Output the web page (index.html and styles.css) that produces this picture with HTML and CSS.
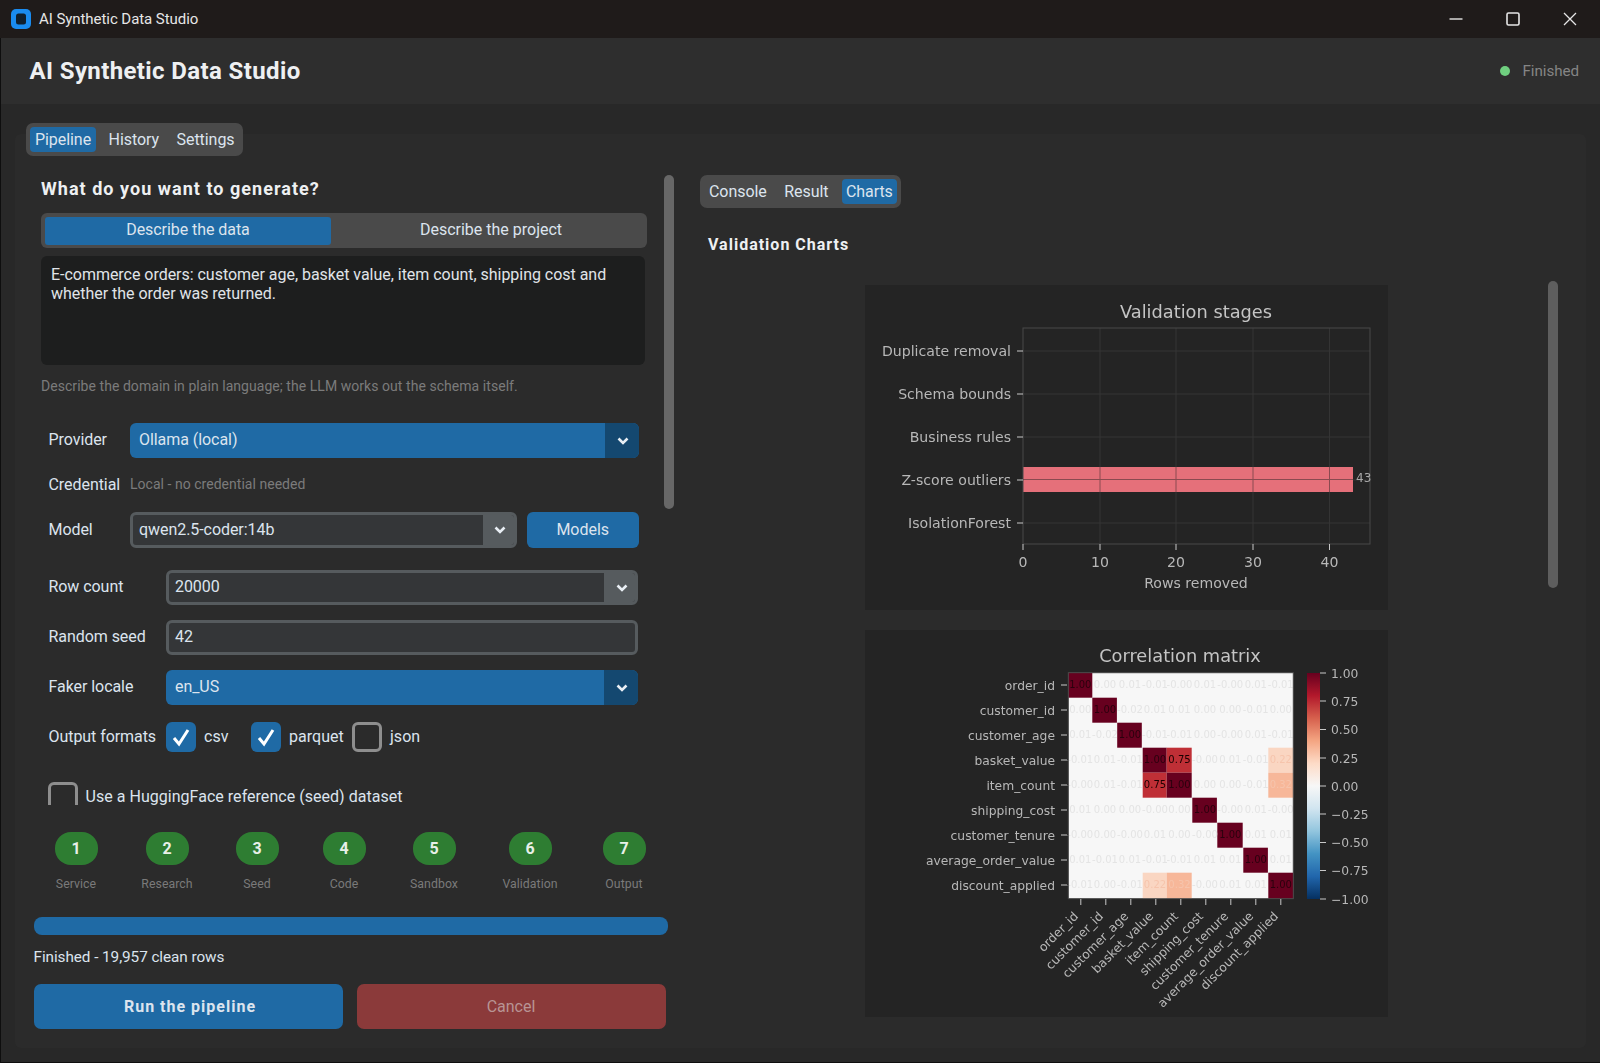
FILE: index.html
```html
<!DOCTYPE html>
<html lang="en">
<head>
<meta charset="utf-8">
<title>AI Synthetic Data Studio</title>
<link rel="stylesheet" href="styles.css">
</head>
<body>
<div class="app">
  <div class="titlebar">
    <svg class="app-icon" viewBox="0 0 20 20"><rect x="0" y="0" width="20" height="20" rx="5" fill="#1a8cf0"/><rect x="5" y="4.5" width="10" height="11" rx="2.5" fill="#10202e"/></svg>
    <span class="titlebar-text">AI Synthetic Data Studio</span>
    <div class="win-controls">
      <svg class="win-icon" viewBox="0 0 14 14"><path d="M0.5 7H13.5" stroke="#e6e6e6" stroke-width="1.4" fill="none"/></svg>
      <svg class="win-icon" viewBox="0 0 14 14"><rect x="1" y="1" width="12" height="12" rx="1.5" stroke="#e6e6e6" stroke-width="1.6" fill="none"/></svg>
      <svg class="win-icon" viewBox="0 0 14 14"><path d="M1 1L13 13M13 1L1 13" stroke="#e6e6e6" stroke-width="1.3" fill="none"/></svg>
    </div>
  </div>
  <header class="header">
    <h1 class="app-title">AI Synthetic Data Studio</h1>
    <div class="status"><span class="status-dot"></span><span>Finished</span></div>
  </header>
  <main class="workspace">
    <div class="panel">
      <nav class="tabs main-tabs">
        <span class="tab active">Pipeline</span><span class="tab">History</span><span class="tab">Settings</span>
      </nav>
      <div class="columns">
        <section class="left-col">
          <div class="form-scroll">
            <div class="form">
              <h2 class="section-title">What do you want to generate?</h2>
              <div class="segmented">
                <span class="seg active">Describe the data</span>
                <span class="seg seg-second">Describe the project</span>
              </div>
              <div class="textarea">E-commerce orders: customer age, basket value, item count, shipping cost and<br>whether the order was returned.</div>
              <p class="hint">Describe the domain in plain language; the LLM works out the schema itself.</p>

              <div class="row row-provider">
                <label class="row-label label-short">Provider</label>
                <div class="combo blue"><span class="combo-value">Ollama (local)</span><span class="combo-arrow"><svg class="chev" viewBox="0 0 12 8"><path d="M1.5 1.5L6 6L10.5 1.5" stroke="#e8eef4" stroke-width="2.6" fill="none"/></svg></span></div>
              </div>
              <div class="row row-credential">
                <label class="row-label label-short">Credential</label>
                <span class="small-hint">Local - no credential needed</span>
              </div>
              <div class="row row-model">
                <label class="row-label label-short">Model</label>
                <div class="combo grey model-combo"><span class="combo-value">qwen2.5-coder:14b</span><span class="combo-arrow"><svg class="chev" viewBox="0 0 12 8"><path d="M1.5 1.5L6 6L10.5 1.5" stroke="#e8eef4" stroke-width="2.6" fill="none"/></svg></span></div>
                <button class="btn-models">Models</button>
              </div>
              <div class="row row-count">
                <label class="row-label label-long">Row count</label>
                <div class="combo grey"><span class="combo-value">20000</span><span class="combo-arrow"><svg class="chev" viewBox="0 0 12 8"><path d="M1.5 1.5L6 6L10.5 1.5" stroke="#e8eef4" stroke-width="2.6" fill="none"/></svg></span></div>
              </div>
              <div class="row row-seed">
                <label class="row-label label-long">Random seed</label>
                <div class="entry">42</div>
              </div>
              <div class="row row-seed">
                <label class="row-label label-long">Faker locale</label>
                <div class="combo blue"><span class="combo-value">en_US</span><span class="combo-arrow"><svg class="chev" viewBox="0 0 12 8"><path d="M1.5 1.5L6 6L10.5 1.5" stroke="#e8eef4" stroke-width="2.6" fill="none"/></svg></span></div>
              </div>
              <div class="row row-formats">
                <label class="row-label label-long">Output formats</label>
                <span class="check on"><svg viewBox="0 0 30 30"><path d="M8 16L13 22L22 8" stroke="#fff" stroke-width="3" fill="none"/></svg></span>
                <span class="check-text text-csv">csv</span>
                <span class="check on"><svg viewBox="0 0 30 30"><path d="M8 16L13 22L22 8" stroke="#fff" stroke-width="3" fill="none"/></svg></span>
                <span class="check-text text-parquet">parquet</span>
                <span class="check"></span>
                <span class="check-text">json</span>
              </div>
              <div class="row row-hf">
                <span class="check"></span>
                <span class="check-text">Use a HuggingFace reference (seed) dataset</span>
              </div>
            </div>
            <div class="scrollbar left-scrollbar"><div class="thumb left-thumb"></div></div>
          </div>
          <div class="run-area">
            <ol class="stepper">
              <li class="step"><span class="step-dot">1</span><span class="step-label">Service</span></li>
              <li class="step"><span class="step-dot">2</span><span class="step-label">Research</span></li>
              <li class="step"><span class="step-dot">3</span><span class="step-label">Seed</span></li>
              <li class="step"><span class="step-dot">4</span><span class="step-label">Code</span></li>
              <li class="step"><span class="step-dot">5</span><span class="step-label">Sandbox</span></li>
              <li class="step"><span class="step-dot">6</span><span class="step-label">Validation</span></li>
              <li class="step"><span class="step-dot">7</span><span class="step-label">Output</span></li>
            </ol>
            <div class="progress"></div>
            <p class="run-status">Finished - 19,957 clean rows</p>
            <div class="run-buttons">
              <button class="btn-run">Run the pipeline</button>
              <button class="btn-cancel">Cancel</button>
            </div>
          </div>
        </section>
        <section class="right-col">
          <nav class="tabs output-tabs">
            <span class="tab">Console</span><span class="tab">Result</span><span class="tab active">Charts</span>
          </nav>
          <h2 class="charts-title">Validation Charts</h2>
          <div class="chart-area">
            <div class="charts">
              <figure class="chart-card card-stages">
                <svg class="chart" viewBox="865 285 523 325">
                  <text class="plot-title" x="1196" y="318" text-anchor="middle">Validation stages</text>
                  <g class="grid">
                    <path d="M1100 328V544M1176 328V544M1253 328V544M1329.5 328V544M1023 351H1370M1023 394H1370M1023 437H1370M1023 480H1370M1023 523H1370"/>
                  </g>
                  <rect x="1023" y="467" width="330" height="25" fill="#e5707a"/>
                  <path class="grid-over" d="M1100 467V492M1176 467V492M1253 467V492M1329.5 467V492M1023 479.5H1353"/>
                  <rect class="plot-frame" x="1023" y="328" width="347" height="216"/>
                  <path class="tick" d="M1017 351H1023M1017 394H1023M1017 437H1023M1017 480H1023M1017 523H1023M1023 544V550M1100 544V550M1176 544V550M1253 544V550M1329.5 544V550"/>
                  <g class="axis-text stage-text end">
                    <text x="1011" y="355.5">Duplicate removal</text>
                    <text x="1011" y="398.5">Schema bounds</text>
                    <text x="1011" y="441.5">Business rules</text>
                    <text x="1011" y="484.5">Z-score outliers</text>
                    <text x="1011" y="527.5">IsolationForest</text>
                  </g>
                  <g class="axis-text stage-text middle">
                    <text x="1023" y="567">0</text>
                    <text x="1100" y="567">10</text>
                    <text x="1176" y="567">20</text>
                    <text x="1253" y="567">30</text>
                    <text x="1329.5" y="567">40</text>
                    <text x="1196" y="588">Rows removed</text>
                  </g>
                  <text class="bar-value" x="1356" y="482">43</text>
                </svg>
              </figure>
              <figure class="chart-card card-corr">
                <svg class="chart" viewBox="865 630 523 387">
                  <defs>
                    <linearGradient id="rdbu" x1="0" y1="0" x2="0" y2="1">
                      <stop offset="0" stop-color="#67001f"/><stop offset=".1" stop-color="#b2182b"/><stop offset=".2" stop-color="#d6604d"/><stop offset=".3" stop-color="#f4a582"/><stop offset=".4" stop-color="#fddbc7"/><stop offset=".5" stop-color="#f7f7f7"/><stop offset=".6" stop-color="#d1e5f0"/><stop offset=".7" stop-color="#92c5de"/><stop offset=".8" stop-color="#4393c3"/><stop offset=".9" stop-color="#2166ac"/><stop offset="1" stop-color="#053061"/>
                    </linearGradient>
                  </defs>
                  <text class="plot-title" x="1180" y="662" text-anchor="middle">Correlation matrix</text>
                  <rect x="1068.3" y="672.7" width="225" height="226" fill="#f7f7f7"/>
                  <g>
                    <rect class="c100" x="1068.3" y="672.7" width="24" height="25"/>
                    <rect class="c100" x="1092.3" y="697.7" width="24.6" height="25"/>
                    <rect class="c100" x="1117.2" y="722.7" width="24.6" height="25"/>
                    <rect class="c100" x="1142.7" y="747.7" width="24" height="25"/>
                    <rect class="c75" x="1166.7" y="747.7" width="25" height="25"/>
                    <rect class="c75" x="1142.7" y="772.7" width="24" height="25"/>
                    <rect class="c100" x="1166.7" y="772.7" width="25" height="25"/>
                    <rect class="c100" x="1192.3" y="797.7" width="24.6" height="25"/>
                    <rect class="c100" x="1217.3" y="822.7" width="25.4" height="25"/>
                    <rect class="c100" x="1243.3" y="847.7" width="24.6" height="25"/>
                    <rect class="c100" x="1268.3" y="872.7" width="25" height="26"/>
                    <rect class="c22" x="1268.3" y="747.7" width="25" height="25"/>
                    <rect class="c32" x="1268.3" y="772.7" width="25" height="25"/>
                    <rect class="c22" x="1142.7" y="872.7" width="24" height="26"/>
                    <rect class="c32" x="1166.7" y="872.7" width="25" height="26"/>
                  </g>
                  <g class="cell-text">
                    <text class="dark" x="1080.3" y="688">1.00</text><text x="1105" y="688">0.00</text><text x="1130" y="688">0.01</text><text x="1155" y="688">-0.01</text><text x="1179.5" y="688">-0.00</text><text x="1205" y="688">0.01</text><text x="1230.3" y="688">-0.00</text><text x="1255.8" y="688">0.01</text><text x="1280.8" y="688">-0.01</text>
                    <text x="1080.3" y="713">0.00</text><text class="dark" x="1105" y="713">1.00</text><text x="1130" y="713">-0.02</text><text x="1155" y="713">0.01</text><text x="1179.5" y="713">0.01</text><text x="1205" y="713">0.00</text><text x="1230.3" y="713">0.00</text><text x="1255.8" y="713">-0.01</text><text x="1280.8" y="713">0.00</text>
                    <text x="1080.3" y="738">0.01</text><text x="1105" y="738">-0.02</text><text class="dark" x="1130" y="738">1.00</text><text x="1155" y="738">-0.01</text><text x="1179.5" y="738">-0.01</text><text x="1205" y="738">0.00</text><text x="1230.3" y="738">-0.00</text><text x="1255.8" y="738">0.01</text><text x="1280.8" y="738">-0.01</text>
                    <text x="1080.3" y="763">-0.01</text><text x="1105" y="763">0.01</text><text x="1130" y="763">-0.01</text><text class="dark" x="1155" y="763">1.00</text><text class="mid" x="1179.5" y="763">0.75</text><text x="1205" y="763">-0.00</text><text x="1230.3" y="763">0.01</text><text x="1255.8" y="763">-0.01</text><text class="warm" x="1280.8" y="763">0.22</text>
                    <text x="1080.3" y="788">-0.00</text><text x="1105" y="788">0.01</text><text x="1130" y="788">-0.01</text><text class="mid" x="1155" y="788">0.75</text><text class="dark" x="1179.5" y="788">1.00</text><text x="1205" y="788">0.00</text><text x="1230.3" y="788">0.00</text><text x="1255.8" y="788">-0.01</text><text class="warm" x="1280.8" y="788">0.32</text>
                    <text x="1080.3" y="813">0.01</text><text x="1105" y="813">0.00</text><text x="1130" y="813">0.00</text><text x="1155" y="813">-0.00</text><text x="1179.5" y="813">0.00</text><text class="dark" x="1205" y="813">1.00</text><text x="1230.3" y="813">-0.00</text><text x="1255.8" y="813">0.01</text><text x="1280.8" y="813">-0.00</text>
                    <text x="1080.3" y="838">-0.00</text><text x="1105" y="838">0.00</text><text x="1130" y="838">-0.00</text><text x="1155" y="838">0.01</text><text x="1179.5" y="838">0.00</text><text x="1205" y="838">-0.00</text><text class="dark" x="1230.3" y="838">1.00</text><text x="1255.8" y="838">0.01</text><text x="1280.8" y="838">0.01</text>
                    <text x="1080.3" y="863">0.01</text><text x="1105" y="863">-0.01</text><text x="1130" y="863">0.01</text><text x="1155" y="863">-0.01</text><text x="1179.5" y="863">-0.01</text><text x="1205" y="863">0.01</text><text x="1230.3" y="863">0.01</text><text class="dark" x="1255.8" y="863">1.00</text><text x="1280.8" y="863">0.01</text>
                    <text x="1080.3" y="888">-0.01</text><text x="1105" y="888">0.00</text><text x="1130" y="888">-0.01</text><text class="warm" x="1155" y="888">0.22</text><text class="warm" x="1179.5" y="888">0.32</text><text x="1205" y="888">-0.00</text><text x="1230.3" y="888">0.01</text><text x="1255.8" y="888">0.01</text><text class="dark" x="1280.8" y="888">1.00</text>
                  </g>
                  <rect class="heat-frame" x="1068.3" y="672.7" width="225" height="226"/>
                  <path class="tick" d="M1061 685H1067M1061 710H1067M1061 735H1067M1061 760H1067M1061 785H1067M1061 810H1067M1061 835H1067M1061 860H1067M1061 885H1067"/>
                  <path class="tick" d="M1080.8 899V905M1105.8 899V905M1130.8 899V905M1155.8 899V905M1180.8 899V905M1205.8 899V905M1230.8 899V905M1255.8 899V905M1280.8 899V905"/>
                  <g class="axis-text end">
                    <text x="1055" y="690">order_id</text>
                    <text x="1055" y="715">customer_id</text>
                    <text x="1055" y="740">customer_age</text>
                    <text x="1055" y="765">basket_value</text>
                    <text x="1055" y="790">item_count</text>
                    <text x="1055" y="815">shipping_cost</text>
                    <text x="1055" y="840">customer_tenure</text>
                    <text x="1055" y="865">average_order_value</text>
                    <text x="1055" y="890">discount_applied</text>
                    <text transform="rotate(-45 1079 917)" x="1079" y="917">order_id</text>
                    <text transform="rotate(-45 1104 917)" x="1104" y="917">customer_id</text>
                    <text transform="rotate(-45 1129 917)" x="1129" y="917">customer_age</text>
                    <text transform="rotate(-45 1154 917)" x="1154" y="917">basket_value</text>
                    <text transform="rotate(-45 1179 917)" x="1179" y="917">item_count</text>
                    <text transform="rotate(-45 1204 917)" x="1204" y="917">shipping_cost</text>
                    <text transform="rotate(-45 1229 917)" x="1229" y="917">customer_tenure</text>
                    <text transform="rotate(-45 1254 917)" x="1254" y="917">average_order_value</text>
                    <text transform="rotate(-45 1279 917)" x="1279" y="917">discount_applied</text>
                  </g>
                  <rect x="1307" y="673" width="13" height="226" fill="url(#rdbu)"/>
                  <path class="tick" d="M1320 673H1326M1320 701H1326M1320 729.5H1326M1320 758H1326M1320 786H1326M1320 814H1326M1320 842.5H1326M1320 870.5H1326M1320 899H1326"/>
                  <g class="axis-text">
                    <text x="1331" y="677.5">1.00</text>
                    <text x="1331" y="705.5">0.75</text>
                    <text x="1331" y="734">0.50</text>
                    <text x="1331" y="762.5">0.25</text>
                    <text x="1331" y="790.5">0.00</text>
                    <text x="1331" y="818.5">−0.25</text>
                    <text x="1331" y="847">−0.50</text>
                    <text x="1331" y="875">−0.75</text>
                    <text x="1331" y="903.5">−1.00</text>
                  </g>
                </svg>
              </figure>
            </div>
            <div class="scrollbar right-scrollbar"><div class="thumb right-thumb"></div></div>
          </div>
        </section>
      </div>
    </div>
  </main>
</div>
</body>
</html>
```
FILE: styles.css
```css
* { box-sizing: border-box; }
html, body { margin: 0; padding: 0; background: #0e0e0e; }
body { width: 1600px; height: 1063px; overflow: hidden; font-family: Roboto, "Liberation Sans", sans-serif; color: #dce4ee; font-size: 16px; letter-spacing: -.06px; }
.app { width: 1600px; height: 1063px; display: flex; flex-direction: column; padding-left: 1px; padding-bottom: 1px; }

.titlebar { height: 38px; margin-left: -1px; flex: none; background: #1f1b1a; display: flex; align-items: center; padding-left: 11px; padding-right: 23px; }
.app-icon { width: 20px; height: 20px; }
.titlebar-text { margin-left: 8px; font-size: 15px; color: #e6e6e6; }
.win-controls { margin-left: auto; display: flex; align-items: center; gap: 43px; }
.win-icon { width: 14px; height: 14px; display: block; }

.header { height: 66px; flex: none; background: #2e2e2e; display: flex; align-items: center; justify-content: space-between; padding: 0 21px 0 28.5px; }
.app-title { margin: 0; font-size: 24px; font-weight: 700; color: #eef0f2; line-height: 1; letter-spacing: .38px; }
.status { display: flex; align-items: center; gap: 12px; font-size: 15.2px; color: #858585; }
.status-dot { width: 10px; height: 10px; border-radius: 50%; background: #6fcf7f; }

.workspace { flex: 1; min-height: 0; background: #282828; padding: 30px 14px 14px; }
.panel { height: 100%; background: #2b2b2b; border-radius: 6px; display: flow-root; }

.tabs { display: flex; background: #4a4a4a; border-radius: 7px; padding: 4px; }
.tab { display: flex; align-items: center; padding: 0 5px; border-radius: 4px; font-size: 16px; color: #dce4ee; height: 25px; }
.tab.active { background: #1f6aa5; }
.main-tabs { width: 217px; height: 33px; margin: -11px 0 0 11px; }
.main-tabs .tab + .tab { margin-left: 7.5px; }
.output-tabs { width: 201px; height: 33px; padding-left: 5px; }
.output-tabs .tab { padding: 0 4px; }
.output-tabs .tab + .tab { margin-left: 9.5px; }

.columns { display: flex; margin-top: 19px; }
.left-col { width: 673px; flex: none; padding-left: 26px; }
.right-col { margin-left: 12px; flex: 1; min-width: 0; }

.form-scroll { display: flex; height: 630px; overflow: hidden; gap: 17px; }
.form { width: 606px; flex: none; }
.scrollbar { width: 10px; flex: none; }
.thumb { background: #676767; border-radius: 5px; }
.left-thumb { height: 334px; }

.section-title { margin: 0; height: 28px; line-height: 28px; font-size: 18px; font-weight: 700; color: #eef0f2; letter-spacing: 1.03px; }
.segmented { margin-top: 10px; height: 35px; background: #4a4a4a; border-radius: 6px; padding: 4px; display: flex; }
.seg { flex: 1; display: flex; align-items: center; justify-content: center; border-radius: 3px; height: 28px; padding-bottom: 3px; }
.seg.active { flex: none; width: 286px; background: #1f6aa5; }
.seg-second { padding-left: 8px; letter-spacing: 0; }
.textarea { margin-top: 8px; width: 604px; height: 109px; background: #1d1e1e; border-radius: 6px; padding: 10px 10px; line-height: 18.5px; letter-spacing: -.03px; color: #e0e4e8; }
.hint { margin: 11px 0 0; height: 20px; line-height: 20px; font-size: 14px; letter-spacing: .05px; color: #7b7b7b; }

.row { display: flex; align-items: center; padding: 0 9px 0 7.5px; }
.row-label { flex: none; color: #dce4ee; padding-bottom: 2px; }
.label-short { width: 81.5px; }
.label-long { width: 117.5px; }
.row-provider { height: 35px; margin-top: 27px; padding-right: 8px; }
.row-credential { height: 26px; margin-top: 13px; }
.row-credential .row-label { padding-bottom: 0; }
.row-model { height: 36px; margin-top: 15px; gap: 10px; padding-right: 8px; }
.row-model .label-short { margin-right: -10px; }
.row-count { height: 35px; margin-top: 22px; }
.row-seed { height: 35px; margin-top: 15px; }
.row-formats { height: 30px; margin-top: 17px; }
.row-hf { height: 30px; margin-top: 30px; }
.row-hf .check { margin-left: -1px; }
.small-hint { font-size: 14px; letter-spacing: .03px; color: #7b7b7b; }

.combo { flex: 1; height: 100%; display: flex; border-radius: 6px; overflow: hidden; }
.combo-value { flex: 1; display: flex; align-items: center; padding-left: 9px; padding-bottom: 2px; }
.combo-arrow { width: 34px; display: flex; align-items: center; justify-content: center; padding-left: 1px; }
.combo.blue { background: #1f6aa5; }
.combo.blue .combo-arrow { background: #144870; }
.combo.grey { background: #343638; border: 3px solid #565b5e; }
.combo.grey .combo-value { padding-left: 6px; }
.combo.grey .combo-arrow { background: #565b5e; margin: -3px -3px -3px 0; }
.chev { width: 12px; height: 8px; display: block; }
.model-combo { flex: none; width: 386.5px; }
.btn-models { flex: 1; height: 100%; border: 0; border-radius: 6px; padding-bottom: 3px; background: #1f6aa5; color: #dce4ee; font: inherit; }
.entry { flex: 1; height: 100%; background: #343638; border: 3px solid #565b5e; border-radius: 6px; padding: 0 0 2px 6px; display: flex; align-items: center; }

.check { width: 30px; height: 30px; flex: none; border-radius: 6px; border: 3px solid #8e8e8e; display: block; }
.check.on { background: #1f6aa5; border: 0; }
.check svg { display: block; width: 30px; height: 30px; }
.check-text { margin-left: 8px; padding-bottom: 2px; letter-spacing: .03px; }
.text-csv { width: 47px; }
.text-parquet { width: 63px; }

.run-area { margin-left: -7.5px; width: 634.5px; }
.stepper { list-style: none; margin: 27px 0 0; padding: 0 0 0 21px; display: grid; grid-template-columns: 91px 90px 87px 90px 96px 94px 43px; }
.step { display: flex; flex-direction: column; align-items: center; width: 43px; }
.step-dot { width: 43px; height: 33px; flex: none; border-radius: 16px; background: #2e7d32; color: #e8f0e8; font-weight: 700; display: flex; align-items: center; justify-content: center; padding-bottom: 1px; }
.step-label { margin-top: 10px; height: 18px; line-height: 18px; font-size: 12.3px; letter-spacing: .05px; white-space: nowrap; color: #7a7a7a; }
.progress { margin-top: 24px; height: 18px; background: #1f6aa5; border-radius: 8px; }
.run-status { margin: 12px 0 0; height: 20px; line-height: 20px; font-size: 15.3px; color: #dce4ee; }
.run-buttons { margin-top: 17px; display: flex; gap: 14px; }
.btn-run, .btn-cancel { width: 309px; height: 45px; border: 0; border-radius: 7px; font-family: inherit; font-size: 16px; }
.btn-run { background: #1f6aa5; color: #dce4ee; font-weight: 700; letter-spacing: 1px; padding-left: 4px; padding-right: 0; }
.btn-cancel { background: #8b3a3a; color: #b89494; }

.charts-title { margin: 27px 0 0 8px; height: 20px; line-height: 20px; font-size: 16px; font-weight: 700; color: #eef0f2; letter-spacing: 1px; }
.chart-area { display: flex; margin-top: 30px; height: 753px; }
.charts { width: 848px; flex: none; padding-left: 165px; display: flex; flex-direction: column; gap: 20px; }
.chart-card { margin: 0; background: #242424; width: 523px; }
.card-stages { height: 325px; }
.card-corr { height: 387px; }
.chart { display: block; width: 100%; height: 100%; font-family: "DejaVu Sans", sans-serif; letter-spacing: 0; filter: blur(.45px); }
.right-thumb { height: 307px; margin-top: -4px; background: #5e5e5e; }

.plot-title { font-size: 17.8px; fill: #c4c4c4; }
.grid path { stroke: #343434; stroke-width: 1; fill: none; }
.grid-over { stroke: #8a4a50; stroke-width: 1; fill: none; }
.plot-frame { fill: none; stroke: #484848; stroke-width: 1; }
.heat-frame { fill: none; stroke: #444; stroke-width: 1; }
.tick { stroke: #c8c8c8; stroke-width: 1; fill: none; }
.axis-text text { font-size: 12.3px; fill: #b8b8b8; }
.stage-text text { font-size: 14.1px; }
.axis-text.end text { text-anchor: end; }
.axis-text.middle text { text-anchor: middle; }
.bar-value { font-size: 12px; fill: #a8a8a8; }
.c100 { fill: #67001f; }
.c75 { fill: #bf2f36; }
.c22 { fill: #fad6c2; }
.c32 { fill: #f7b799; }
.cell-text text { font-size: 10px; text-anchor: middle; fill: #e4e4e4; }
.cell-text text.dark { fill: #2a000d; }
.cell-text text.mid { fill: #1a0000; }
.cell-text text.warm { fill: #f6c4ac; }
```
